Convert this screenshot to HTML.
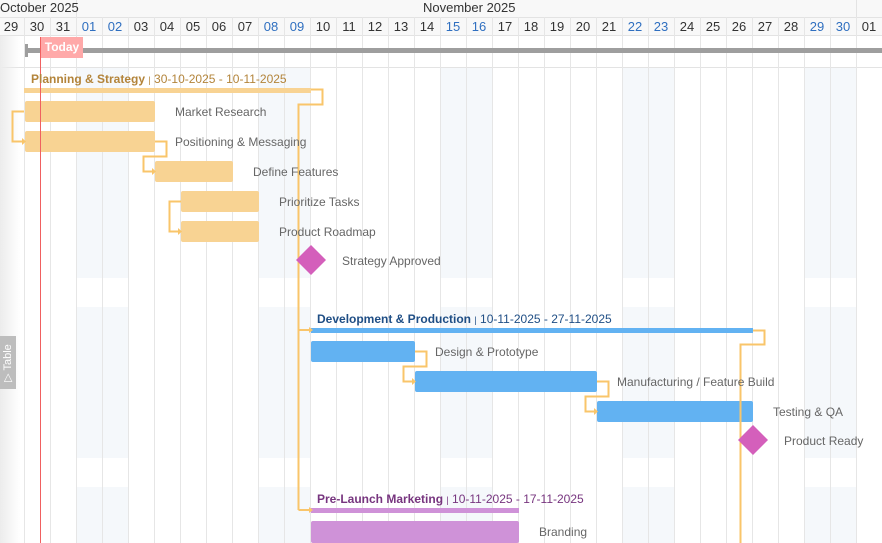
<!DOCTYPE html>
<html><head><meta charset="utf-8">
<style>
*{margin:0;padding:0;box-sizing:border-box}
body{width:882px;height:543px;overflow:hidden;background:#fff;font-family:"Liberation Sans",Arial,sans-serif;position:relative}
.a{position:absolute}
.hd{font-size:13px;color:#333;text-align:center;width:26px;top:19px}
.we{color:#2f6fc0}
.lbl{font-size:12px;color:#666;white-space:nowrap}
.sh{background:#f5f8fb}
</style></head><body>
<div class="a sh" style="left:76px;top:67px;width:52px;height:211px"></div>
<div class="a sh" style="left:258px;top:67px;width:52px;height:211px"></div>
<div class="a sh" style="left:440px;top:67px;width:52px;height:211px"></div>
<div class="a sh" style="left:622px;top:67px;width:52px;height:211px"></div>
<div class="a sh" style="left:804px;top:67px;width:52px;height:211px"></div>
<div class="a sh" style="left:76px;top:307px;width:52px;height:151px"></div>
<div class="a sh" style="left:258px;top:307px;width:52px;height:151px"></div>
<div class="a sh" style="left:440px;top:307px;width:52px;height:151px"></div>
<div class="a sh" style="left:622px;top:307px;width:52px;height:151px"></div>
<div class="a sh" style="left:804px;top:307px;width:52px;height:151px"></div>
<div class="a sh" style="left:76px;top:487px;width:52px;height:56px"></div>
<div class="a sh" style="left:258px;top:487px;width:52px;height:56px"></div>
<div class="a sh" style="left:440px;top:487px;width:52px;height:56px"></div>
<div class="a sh" style="left:622px;top:487px;width:52px;height:56px"></div>
<div class="a sh" style="left:804px;top:487px;width:52px;height:56px"></div>
<div class="a" style="left:0;top:0;width:882px;height:36px;background:#f8f8f8;border-bottom:1px solid #e3e3e3"></div>
<div class="a" style="left:0;top:17px;width:882px;height:1px;background:#e3e3e3"></div>
<div class="a" style="left:76px;top:0;width:1px;height:17px;background:#e3e3e3"></div>
<div class="a" style="left:856px;top:0;width:1px;height:17px;background:#e3e3e3"></div>
<div class="a" style="left:0;top:0;font-size:13px;color:#333">October 2025</div>
<div class="a" style="left:423px;top:0;font-size:13px;color:#333">November 2025</div>
<div class="a" style="left:0;top:67px;width:882px;height:1px;background:#e3e3e3"></div>
<svg class="a" style="left:0;top:17px" width="882" height="526">
<g stroke="#e6e6e6" stroke-width="1">
<line x1="24.5" y1="0" x2="24.5" y2="526"/><line x1="50.5" y1="0" x2="50.5" y2="526"/><line x1="76.5" y1="0" x2="76.5" y2="526"/><line x1="102.5" y1="0" x2="102.5" y2="526"/><line x1="128.5" y1="0" x2="128.5" y2="526"/><line x1="154.5" y1="0" x2="154.5" y2="526"/><line x1="180.5" y1="0" x2="180.5" y2="526"/><line x1="206.5" y1="0" x2="206.5" y2="526"/><line x1="232.5" y1="0" x2="232.5" y2="526"/><line x1="258.5" y1="0" x2="258.5" y2="526"/><line x1="284.5" y1="0" x2="284.5" y2="526"/><line x1="310.5" y1="0" x2="310.5" y2="526"/><line x1="336.5" y1="0" x2="336.5" y2="526"/><line x1="362.5" y1="0" x2="362.5" y2="526"/><line x1="388.5" y1="0" x2="388.5" y2="526"/><line x1="414.5" y1="0" x2="414.5" y2="526"/><line x1="440.5" y1="0" x2="440.5" y2="526"/><line x1="466.5" y1="0" x2="466.5" y2="526"/><line x1="492.5" y1="0" x2="492.5" y2="526"/><line x1="518.5" y1="0" x2="518.5" y2="526"/><line x1="544.5" y1="0" x2="544.5" y2="526"/><line x1="570.5" y1="0" x2="570.5" y2="526"/><line x1="596.5" y1="0" x2="596.5" y2="526"/><line x1="622.5" y1="0" x2="622.5" y2="526"/><line x1="648.5" y1="0" x2="648.5" y2="526"/><line x1="674.5" y1="0" x2="674.5" y2="526"/><line x1="700.5" y1="0" x2="700.5" y2="526"/><line x1="726.5" y1="0" x2="726.5" y2="526"/><line x1="752.5" y1="0" x2="752.5" y2="526"/><line x1="778.5" y1="0" x2="778.5" y2="526"/><line x1="804.5" y1="0" x2="804.5" y2="526"/><line x1="830.5" y1="0" x2="830.5" y2="526"/><line x1="856.5" y1="0" x2="856.5" y2="526"/>
</g></svg>
<div class="a hd" style="left:-2px">29</div><div class="a hd" style="left:24px">30</div><div class="a hd" style="left:50px">31</div><div class="a hd we" style="left:76px">01</div><div class="a hd we" style="left:102px">02</div><div class="a hd" style="left:128px">03</div><div class="a hd" style="left:154px">04</div><div class="a hd" style="left:180px">05</div><div class="a hd" style="left:206px">06</div><div class="a hd" style="left:232px">07</div><div class="a hd we" style="left:258px">08</div><div class="a hd we" style="left:284px">09</div><div class="a hd" style="left:310px">10</div><div class="a hd" style="left:336px">11</div><div class="a hd" style="left:362px">12</div><div class="a hd" style="left:388px">13</div><div class="a hd" style="left:414px">14</div><div class="a hd we" style="left:440px">15</div><div class="a hd we" style="left:466px">16</div><div class="a hd" style="left:492px">17</div><div class="a hd" style="left:518px">18</div><div class="a hd" style="left:544px">19</div><div class="a hd" style="left:570px">20</div><div class="a hd" style="left:596px">21</div><div class="a hd we" style="left:622px">22</div><div class="a hd we" style="left:648px">23</div><div class="a hd" style="left:674px">24</div><div class="a hd" style="left:700px">25</div><div class="a hd" style="left:726px">26</div><div class="a hd" style="left:752px">27</div><div class="a hd" style="left:778px">28</div><div class="a hd we" style="left:804px">29</div><div class="a hd we" style="left:830px">30</div><div class="a hd" style="left:856px">01</div>
<div class="a" style="left:0;top:36px;width:20px;height:507px;background:linear-gradient(to right,#ececec,rgba(255,255,255,0))"></div>
<div class="a" style="left:25px;top:48px;width:857px;height:5px;background:#9e9e9e"></div>
<div class="a" style="left:25px;top:44px;width:3px;height:13px;background:#9e9e9e"></div>
<div class="a" style="left:24px;top:88px;width:287px;height:5px;background:#f8d393"></div>
<div class="a" style="left:25px;top:101px;width:130px;height:21px;background:#f8d393;border-radius:2px"></div>
<div class="a" style="left:25px;top:131px;width:130px;height:21px;background:#f8d393;border-radius:2px"></div>
<div class="a" style="left:155px;top:161px;width:78px;height:21px;background:#f8d393;border-radius:2px"></div>
<div class="a" style="left:181px;top:191px;width:78px;height:21px;background:#f8d393;border-radius:2px"></div>
<div class="a" style="left:181px;top:221px;width:78px;height:21px;background:#f8d393;border-radius:2px"></div>
<div class="a" style="left:311px;top:328px;width:442px;height:5px;background:#62b2f2"></div>
<div class="a" style="left:311px;top:341px;width:104px;height:21px;background:#62b2f2;border-radius:2px"></div>
<div class="a" style="left:415px;top:371px;width:182px;height:21px;background:#62b2f2;border-radius:2px"></div>
<div class="a" style="left:597px;top:401px;width:156px;height:21px;background:#62b2f2;border-radius:2px"></div>
<div class="a" style="left:311px;top:508px;width:208px;height:5px;background:#cf92d8"></div>
<div class="a" style="left:311px;top:521px;width:208px;height:22px;background:#cf92d8;border-radius:2px"></div>
<svg class="a" style="left:0;top:0" width="882" height="543">
<g fill="none" stroke="#f9c56a" stroke-width="2">
<path d="M311 89.5H322.5V104.5H298.5V510"/>
<path d="M298.5 330H309M298.5 510H309"/>
<path d="M24 111.5H12.5V141.5H22"/>
<path d="M155 141.5H166.5V156.5H143.5V171.5H152"/>
<path d="M181 201.5H169.5V231.5H178"/>
<path d="M415 351.5H426.5V366.5H403.5V381.5H412"/>
<path d="M597 381.5H608.5V396.5H585.5V411.5H594"/>
<path d="M753 330.5H764.5V344.5H740.5V543"/>
</g>
<g fill="#f9c56a">
<path d="M309 327l4 3-4 3z"/><path d="M309 507l4 3-4 3z"/><path d="M22 138l4 3.5-4 3.5z"/><path d="M152 168l4 3.5-4 3.5z"/><path d="M178 228l4 3.5-4 3.5z"/><path d="M412 378l4 3.5-4 3.5z"/><path d="M594 408l4 3.5-4 3.5z"/>
</g>
<path d="M311 245l15 15-15 15-15-15z" fill="#d45fbb"/>
<path d="M753 425l15 15-15 15-15-15z" fill="#d45fbb"/>
<line x1="40.5" y1="37" x2="40.5" y2="543" stroke="#f06060" stroke-width="1"/>
</svg>
<div class="a" style="left:41px;top:37px;width:42px;height:21px;background:#ffa9a9;color:#fff;font-size:12px;font-weight:bold;line-height:21px;text-align:center">Today</div>
<div class="a" style="left:31px;top:72px;font-size:12px;font-weight:bold;color:#b3843a;white-space:nowrap">Planning &amp; Strategy <span style="font-weight:normal;font-size:9px">|</span> <span style="font-weight:normal">30-10-2025 - 10-11-2025</span></div>
<div class="a lbl" style="left:175px;top:105px">Market Research</div>
<div class="a lbl" style="left:175px;top:135px">Positioning &amp; Messaging</div>
<div class="a lbl" style="left:253px;top:165px">Define Features</div>
<div class="a lbl" style="left:279px;top:195px">Prioritize Tasks</div>
<div class="a lbl" style="left:279px;top:225px">Product Roadmap</div>
<div class="a lbl" style="left:342px;top:254px">Strategy Approved</div>
<div class="a" style="left:317px;top:312px;font-size:12px;font-weight:bold;color:#1f4e85;white-space:nowrap">Development &amp; Production <span style="font-weight:normal;font-size:9px">|</span> <span style="font-weight:normal">10-11-2025 - 27-11-2025</span></div>
<div class="a lbl" style="left:435px;top:345px">Design &amp; Prototype</div>
<div class="a lbl" style="left:617px;top:375px">Manufacturing / Feature Build</div>
<div class="a lbl" style="left:773px;top:405px">Testing &amp; QA</div>
<div class="a lbl" style="left:784px;top:434px">Product Ready</div>
<div class="a" style="left:317px;top:492px;font-size:12px;font-weight:bold;color:#77357f;white-space:nowrap">Pre-Launch Marketing <span style="font-weight:normal;font-size:9px">|</span> <span style="font-weight:normal">10-11-2025 - 17-11-2025</span></div>
<div class="a lbl" style="left:539px;top:525px">Branding</div>
<div class="a" style="left:0;top:336px;width:16px;height:53px;background:#bdbdbd"></div>
<div class="a" style="left:-19px;top:355px;width:54px;height:16px;transform:rotate(-90deg);color:#fff;font-size:11px;line-height:16px;text-align:center;white-space:nowrap">▷ Table</div>
</body></html>
